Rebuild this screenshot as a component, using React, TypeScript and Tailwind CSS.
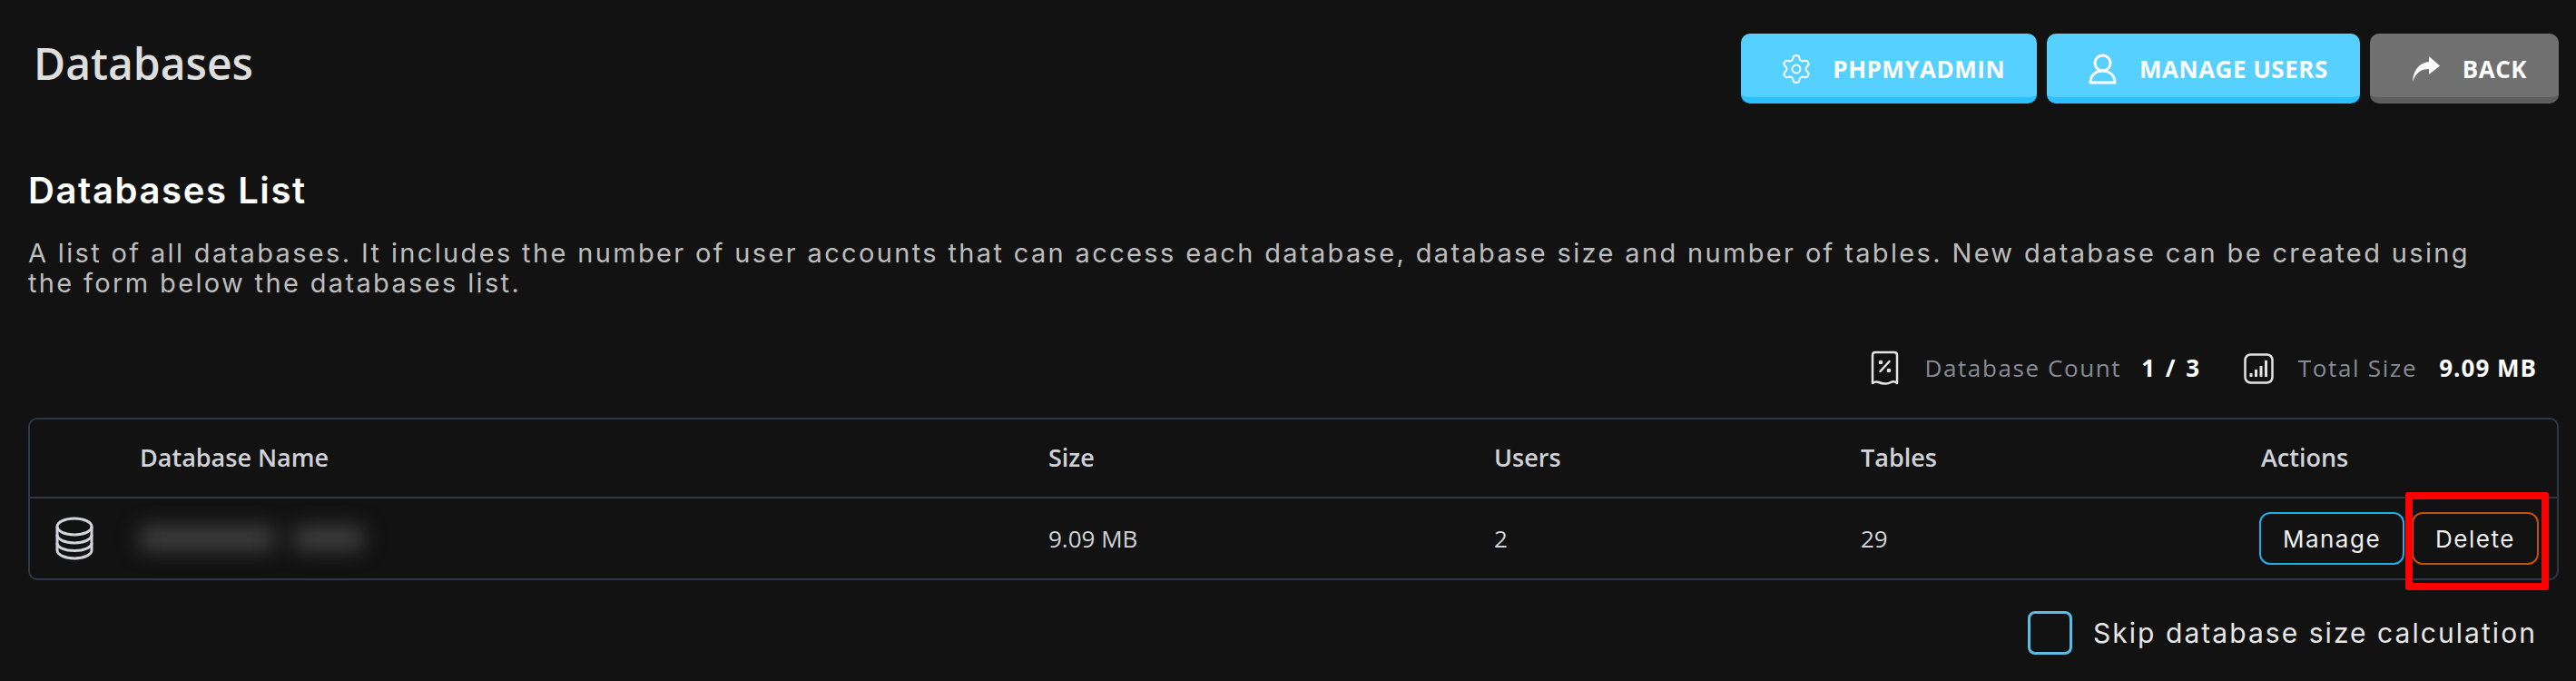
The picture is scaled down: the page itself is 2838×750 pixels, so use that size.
import { Settings } from "lucide-react";

function UserIcon() {
  return (
    <svg width="31" height="34" viewBox="0 0 31 34" fill="none" stroke="white" strokeWidth="3" strokeLinejoin="round">
      <circle cx="15.5" cy="10.5" r="8.5" />
      <path d="M2 32c0-8 6-13 13.5-13S29 24 29 32z" />
    </svg>
  );
}

function ShareIcon() {
  return (
    <svg width="31" height="30" viewBox="0 0 31 30" fill="white">
      <path d="M19 1l12 10.5L19 21v-6C10 15 5 19 1 29 1.500 17 8 8 19 7z" />
    </svg>
  );
}

function ReceiptIcon() {
  return (
    <svg width="31" height="39" viewBox="0 0 31 39" fill="none" stroke="#e4e4e4" strokeWidth="2.500">
      <path d="M2 36V5q0-3 3-3h21q3 0 3 3v31q-3.500-3-6.800-1t-6.700 1.500q-3.400 0-6.700-1.500T2 36z" strokeLinejoin="round" />
      <path d="M10.500 23l10-11" strokeLinecap="round" />
      <circle cx="11" cy="13" r="1.100" fill="#e4e4e4" />
      <circle cx="20" cy="22" r="1.100" fill="#e4e4e4" />
    </svg>
  );
}

function ChartIcon() {
  return (
    <svg width="33" height="34" viewBox="0 0 33 34" fill="none" stroke="#e4e4e4">
      <rect x="1.500" y="1.500" width="30" height="31" rx="6" strokeWidth="2.500" />
      <path d="M8 26v-4M13.500 26v-8M19 26v-12M24.500 26V8" strokeWidth="3" />
    </svg>
  );
}

function DatabaseIcon() {
  return (
    <svg width="42" height="48" viewBox="0 0 42 48" fill="none" stroke="#d2d4da" strokeWidth="3">
      <ellipse cx="21" cy="11" rx="19" ry="9" />
      <path d="M2 11v26c0 5 8.500 9 19 9s19-4 19-9V11" />
      <path d="M2 20c0 5 8.500 9 19 9s19-4 19-9" />
      <path d="M2 29c0 5 8.500 8.500 19 8.500S40 34 40 29" />
    </svg>
  );
}

const headerButton =
  "flex h-[77px] items-center gap-[25px] rounded-[10px] border-b-[7px] pl-[46px] pr-[35px] pt-[8px] font-bold text-[26px] tracking-[0.5px] text-white";

export default function App() {
  return (
    <div className="relative h-[750px] w-full overflow-hidden bg-[#121212] font-['Open_Sans',sans-serif]">
      {/* Top bar */}
      <div className="flex items-start justify-between pl-[37px] pr-[19px] pt-[37px]">
        <h1 className="mt-[8px] text-[48px] leading-[50px] font-semibold text-[#dedede]">Databases</h1>
        <div className="flex gap-[11px]">
          <button className={`${headerButton} border-[#2bc1ff] bg-[#56d0ff]`}>
            <Settings size={36} strokeWidth={1.300} className="-mx-[3px]" />
            PHPMYADMIN
          </button>
          <button className={`${headerButton} border-[#2bc1ff] bg-[#56d0ff]`}>
            <UserIcon />
            MANAGE USERS
          </button>
          <button className={`${headerButton} border-[#5d5e5d] bg-[#6f706f]`}>
            <ShareIcon />
            BACK
          </button>
        </div>
      </div>

      {/* Section heading */}
      <div className="pl-[31px] pr-[19px]">
        <h2 className="mt-[72px] font-['Inter',sans-serif] text-[40px] leading-[48px] font-semibold tracking-[1.600px] text-white">
          Databases List
        </h2>
        <p className="mt-[28px] w-[2730px] font-['Inter',sans-serif] text-[29px] leading-[33px] tracking-[2.350px] text-[#bdbdbd]">
          A list of all databases. It includes the number of user accounts that can access each database, database size and number of tables. New database can be created using the form below the databases list.
        </p>

        {/* Totals */}
        <div className="mt-[58px] flex items-center justify-end pr-[24px] text-[26px]">
          <ReceiptIcon />
          <span className="ml-[28px] tracking-[1.600px] text-[#868b96]">Database Count</span>
          <span className="ml-[22px] font-bold tracking-[2.500px] text-white">1 / 3</span>
          <span className="ml-[46px]">
            <ChartIcon />
          </span>
          <span className="ml-[27px] tracking-[1.700px] text-[#868b96]">Total Size</span>
          <span className="ml-[24px] font-bold tracking-[1px] text-white">9.09 MB</span>
        </div>

        {/* Table */}
        <div className="mt-[35px] rounded-[10px] border-2 border-[#2d3746] text-[26px] text-[#d0d2d8]">
          <div className="flex h-[87px] items-center border-b-2 border-[#2d3746] text-[27px] font-semibold">
            <div className="w-[121px]" />
            <div className="w-[1001px]">Database Name</div>
            <div className="w-[491px]">Size</div>
            <div className="w-[404px]">Users</div>
            <div className="w-[441px]">Tables</div>
            <div>Actions</div>
          </div>
          <div className="flex h-[88px] items-center">
            <div className="w-[121px] pl-[28px]">
              <DatabaseIcon />
            </div>
            <div className="flex w-[1001px] gap-[22px] blur-[11px]">
              <div className="h-[26px] w-[148px] bg-[#404040]" />
              <div className="h-[26px] w-[76px] bg-[#404040]" />
            </div>
            <div className="w-[491px]">9.09 MB</div>
            <div className="w-[404px]">2</div>
            <div className="w-[439px]">29</div>
            <div className="flex gap-[8px] font-['Inter',sans-serif] text-[26px] tracking-[1.500px] text-[#eeeeee]">
              <button className="h-[58px] w-[160px] rounded-[12px] border-2 border-[#1eaee8]">Manage</button>
              <button className="h-[58px] w-[140px] rounded-[12px] border-2 border-[#c2500f]">Delete</button>
            </div>
          </div>
        </div>

        {/* Skip size option */}
        <div className="mt-[34px] flex items-center justify-end gap-[23px] pr-[24px]">
          <span className="h-[48px] w-[49px] rounded-[8px] border-[3px] border-[#5bbde4]" />
          <span className="font-['Inter',sans-serif] text-[30px] tracking-[2.050px] text-[#e6e6e6]">
            Skip database size calculation
          </span>
        </div>
      </div>

      {/* Red annotation box over the Delete button */}
      <div className="absolute left-[2650px] top-[542px] h-[108px] w-[158px] rounded-[3px] border-8 border-[#ff0000]" />
    </div>
  );
}
